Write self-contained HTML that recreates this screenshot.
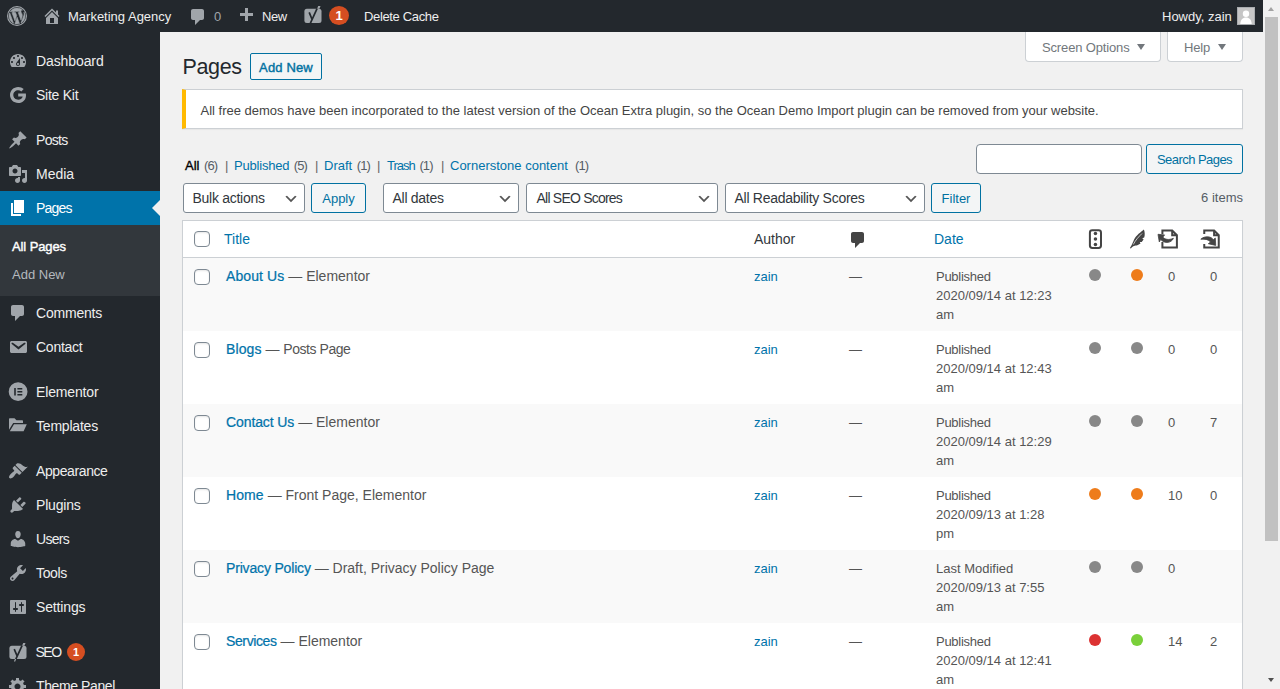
<!DOCTYPE html>
<html lang="en">
<head>
<meta charset="utf-8">
<title>Pages ‹ Marketing Agency — WordPress</title>
<style>
*{box-sizing:border-box}
html,body{margin:0;padding:0}
body{width:1280px;height:689px;overflow:hidden;position:relative;background:#f1f1f1;font-family:"Liberation Sans",sans-serif;font-size:13px;line-height:1.4;color:#444}
a{color:#0073aa;text-decoration:none}
svg{display:block}
/* admin bar */
#bar{position:absolute;left:0;top:0;width:1263px;height:32px;background:#23282d;color:#eee;font-size:13px;line-height:32px;z-index:5}
#bar .it{position:absolute;top:1px;height:32px;white-space:nowrap;color:#eee}
#bar svg{position:absolute;fill:#a0a5aa}
/* sidebar */
#menu{position:absolute;left:0;top:32px;width:160px;height:657px;background:#23282d}
#menu .mi{position:absolute;left:0;width:160px;height:34px;color:#eee;font-size:14px;line-height:34px}
#menu .mi span.t{position:absolute;left:36px;top:0;white-space:nowrap}
#menu .mi svg{position:absolute;left:8px;top:7px;width:20px;height:20px;fill:#a0a5aa}
#menu .mi.cur{background:#0073aa;color:#fff}
#menu .mi.cur svg{fill:#fff}
#menu .mi.cur:after{content:"";position:absolute;right:0;top:9px;border:8px solid transparent;border-right-color:#f1f1f1}
#sub{position:absolute;left:0;top:193px;width:160px;height:71px;background:#32373c;font-size:13px}
#sub div{position:absolute;left:12px;white-space:nowrap;line-height:18px}
.badge{position:absolute;width:18px;height:18px;border-radius:9px;background:#d54e21;color:#fff;font-size:11px;line-height:18px;text-align:center}
/* scrollbar */
#sb{position:absolute;left:1263px;top:0;width:17px;height:689px;background:#f1f1f1}
#sb .th{position:absolute;left:2px;top:17px;width:13px;height:524px;background:#c1c1c1}
#sb .up{position:absolute;left:4.500px;top:7px;border:3.500px solid transparent;border-top:none;border-bottom:4px solid #a3a3a3}
#sb .dn{position:absolute;left:4.500px;top:678px;border:3.500px solid transparent;border-bottom:none;border-top:4px solid #505050}
/* content */
.tab{position:absolute;top:32px;height:30px;background:#fff;border:1px solid #ccd0d4;border-top:none;border-radius:0 0 4px 4px;color:#72777c;font-size:13px;line-height:31px;white-space:nowrap;letter-spacing:-.15px}
.tab:after{content:"";position:absolute;top:12px;left:var(--a);border:4px solid transparent;border-bottom:none;border-top:6px solid #72777c;border-left-width:4.5px;border-right-width:4.5px}
h1{position:absolute;left:182.500px;top:52px;margin:0;font-size:21.500px;font-weight:400;line-height:30px;color:#23282d;letter-spacing:-.35px}
.btn{position:absolute;border:1px solid #0071a1;border-radius:3px;background:#f3f5f6;color:#0071a1;font-size:13px;line-height:29px;height:30px;text-align:center;white-space:nowrap}
#notice{position:absolute;left:182px;top:89px;width:1061px;height:40px;background:#fff;border:1px solid #ccd0d4;border-left:4px solid #ffb900;box-shadow:0 1px 1px rgba(0,0,0,.04)}
#notice p{position:absolute;left:14.500px;top:1px;margin:0;line-height:40px;white-space:nowrap;color:#444}
#subsub{position:absolute;left:0;top:157px;line-height:18px;white-space:nowrap;color:#666}
#subsub>*{position:absolute;top:0;font-style:normal}
#subsub .c{color:#555d66;letter-spacing:-.9px;margin-left:1px}
.inp{position:absolute;background:#fff;border:1px solid #7e8993;border-radius:4px;height:30px}
.sel{position:absolute;background:#fff;border:1px solid #7e8993;border-radius:3px;height:30px;top:183px;color:#32373c;font-size:14px;line-height:28px;padding-left:8.500px;white-space:nowrap;letter-spacing:-.28px}
.sel svg{position:absolute;right:5px;top:7px;width:16px;height:16px}
#items{position:absolute;right:37px;top:189px;line-height:18px;color:#555d66}
/* table */
#tbl{position:absolute;left:182px;top:220px;width:1061px;height:480px;background:#fff;border:1px solid #ccd0d4;box-shadow:0 1px 1px rgba(0,0,0,.04)}
#tbl .hd{position:absolute;left:0;top:0;width:1059px;height:37px;border-bottom:1px solid #ccd0d4;font-size:14px;line-height:36px}
.row{position:absolute;left:0;width:1059px;height:73px;font-size:13px;line-height:19px;color:#555}
.row.odd{background:#f9f9f9}
.cb{position:absolute;left:11px;width:16px;height:16px;border:1px solid #7e8993;border-radius:4px;background:#fff;box-shadow:inset 0 1px 2px rgba(0,0,0,.1)}
.row .ti{position:absolute;left:43px;top:8px;font-size:14px;line-height:20px;white-space:nowrap;color:#555}
.row .ti a{-webkit-text-stroke:.22px #0073aa;color:#0073aa;letter-spacing:.1px}
.row .au{position:absolute;left:571px;top:9px}
.row .cm{position:absolute;left:666px;top:9px}
.row .dt{position:absolute;left:753px;top:9px;width:130px}
.row .dt i{font-style:normal;letter-spacing:-.27px}
.dot{position:absolute;top:11px;width:12px;height:12px;border-radius:6px}
.g{background:#888}.o{background:#ee7c1b}.r{background:#dc3232}.gr{background:#7ad03a}
.row .n1{position:absolute;left:985px;top:9px}
.row .n2{position:absolute;left:1027px;top:9px}
</style>
</head>
<body>
<div id="menu">
<div class="mi" style="top:12px"><svg viewBox="0 0 20 20"><path d="M3.760 16h12.480c1.100-1.370 1.760-3.110 1.760-5 0-4.420-3.580-8-8-8s-8 3.580-8 8c0 1.890.66 3.630 1.760 5zM10 4c.55 0 1 .45 1 1s-.45 1-1 1-1-.45-1-1 .45-1 1-1zM6 6c.55 0 1 .45 1 1s-.45 1-1 1-1-.45-1-1 .45-1 1-1zm8 0c.55 0 1 .45 1 1s-.45 1-1 1-1-.45-1-1 .45-1 1-1zm-5.370 5.550L12 7v6c0 1.100-.9 2-2 2s-2-.9-2-2c0-.57.24-1.080.63-1.450zM4 10c.55 0 1 .45 1 1s-.45 1-1 1-1-.45-1-1 .45-1 1-1zm12 0c.55 0 1 .45 1 1s-.45 1-1 1-1-.45-1-1 .45-1 1-1zm-5 3c0-.55-.45-1-1-1s-1 .45-1 1 .45 1 1 1 1-.45 1-1z"/></svg><span class="t" style="letter-spacing:-0.1px">Dashboard</span></div>
<div class="mi" style="top:46px"><svg viewBox="0 0 20 20"><path d="M10.200 8.400v3.200h4.500c-.4 1.900-2 3.100-4.500 3.100-2.700 0-4.900-2.100-4.900-4.700s2.200-4.700 4.900-4.700c1.200 0 2.300.4 3.100 1.100l2.400-2.400C14.200 2.700 12.300 2 10.200 2 5.700 2 2 5.600 2 10s3.700 8 8.200 8c4.700 0 7.800-3.200 7.800-7.800 0-.6-.1-1.200-.2-1.800z"/></svg><span class="t" style="letter-spacing:-0.25px">Site Kit</span></div>
<div class="mi" style="top:91px"><svg viewBox="0 0 20 20"><path d="M10.440 3.020l1.820-1.820 6.360 6.350-1.830 1.820c-1.050-.68-2.480-.57-3.410.36l-.75.75c-.92.93-1.040 2.350-.35 3.410l-1.830 1.820-2.410-2.410-2.800 2.790c-.42.42-3.380 2.710-3.800 2.290s1.860-3.390 2.280-3.810l2.790-2.790L4.100 9.360l1.830-1.820c1.050.69 2.480.57 3.400-.36l.75-.75c.93-.92 1.050-2.350.36-3.410z"/></svg><span class="t" style="letter-spacing:-0.7px">Posts</span></div>
<div class="mi" style="top:125px"><svg viewBox="0 0 20 20"><path d="M13 11V4c0-.55-.45-1-1-1h-1.670L9 1H5L3.670 3H2c-.55 0-1 .45-1 1v7c0 .55.45 1 1 1h10c.55 0 1-.45 1-1zM7 4.500c1.380 0 2.500 1.120 2.500 2.500S8.380 9.500 7 9.500 4.500 8.380 4.500 7 5.620 4.500 7 4.500zM14 6h5v10.500c0 1.380-1.120 2.500-2.500 2.500S14 17.880 14 16.500s1.120-2.500 2.500-2.500c.17 0 .34.020.5.050V9h-3V6zm-4 8.050V13h2v3.500c0 1.380-1.120 2.500-2.500 2.500S7 17.880 7 16.500 8.120 14 9.500 14c.17 0 .34.020.5.050z"/></svg><span class="t">Media</span></div>
<div class="mi cur" style="top:159px"><svg viewBox="0 0 20 20"><path d="M6 15V2h10v13H6zm-1 1h8v2H3V5h2v11z"/></svg><span class="t" style="letter-spacing:-0.8px">Pages</span></div>
<div class="mi" style="top:264px"><svg viewBox="0 0 20 20"><path d="M5 2h9c1.100 0 2 .9 2 2v7c0 1.100-.9 2-2 2h-2l-5 5v-5H5c-1.100 0-2-.9-2-2V4c0-1.100.9-2 2-2z"/></svg><span class="t" style="letter-spacing:-0.2px">Comments</span></div>
<div class="mi" style="top:298px"><svg viewBox="0 0 20 20"><path d="M3.870 4h13.250C18.370 4 19 4.590 19 5.790v8.420c0 1.190-.63 1.790-1.880 1.790H3.870c-1.250 0-1.880-.6-1.880-1.790V5.790c0-1.200.63-1.790 1.880-1.790zm6.620 8.600l6.740-5.530c.24-.2.43-.66.13-1.070-.29-.41-.82-.42-1.170-.17l-5.700 3.860L4.800 5.830c-.35-.25-.88-.24-1.170.17-.3.410-.11.870.13 1.070z"/></svg><span class="t" style="letter-spacing:-0.25px">Contact</span></div>
<div class="mi" style="top:343px"><svg viewBox="0 0 20 20"><path fill-rule="evenodd" d="M10.100.3a9.400 9.400 0 1 0 0 18.800 9.400 9.400 0 0 0 0-18.800zM6.200 6h1.600v7.500H6.200zm3.200 0h4.900v1.500H9.400zm0 3h4.900v1.500H9.400zm0 3h4.900v1.500H9.400z"/></svg><span class="t" style="letter-spacing:-0.15px">Elementor</span></div>
<div class="mi" style="top:377px"><svg viewBox="0 0 20 20"><path d="M1 3.200c0-.6.400-1 1-1h4.500l2 2H14c.6 0 1 .4 1 1V7H5.200L1 13.800zM6 8.200H18.800L15.600 15.300H1.800z"/></svg><span class="t" style="letter-spacing:-0.2px">Templates</span></div>
<div class="mi" style="top:422px"><svg viewBox="0 0 20 20"><path d="M14.480 11.060L7.410 3.990l1.500-1.500c.5-.56 2.300-.47 3.510.32 1.210.8 1.430 1.280 2.910 2.100 1.180.64 2.450 1.260 4.450.85zm-.71.71L6.700 4.700 4.930 6.470c-.39.39-.39 1.020 0 1.410l1.060 1.060c.39.39.39 1.030 0 1.420-.6.6-1.430 1.110-2.210 1.690-.35.26-.7.53-1.010.84C1.430 14.230.4 16.080 1.400 17.070c.99 1 2.840-.03 4.180-1.360.31-.31.58-.66.85-1.020.57-.78 1.080-1.610 1.690-2.210.39-.39 1.020-.39 1.410 0l1.060 1.060c.39.39 1.020.39 1.410 0z"/></svg><span class="t" style="letter-spacing:-0.4px">Appearance</span></div>
<div class="mi" style="top:456px"><svg viewBox="0 0 20 20"><path d="M13.110 4.360L9.870 7.600 8 5.730l3.240-3.240c.35-.34 1.050-.2 1.560.32.52.51.66 1.210.31 1.550zm-8 1.770l.91-1.120 9.010 9.010-1.190.84c-.71.71-2.630 1.160-3.820 1.160H6.140L4.900 17.260c-.59.59-1.540.59-2.120 0-.59-.58-.59-1.530 0-2.120l1.240-1.240v-3.880c0-1.130.4-3.190 1.090-3.890zm7.260 3.970l3.240-3.240c.34-.35 1.040-.21 1.550.31.520.51.66 1.210.31 1.550l-3.240 3.250z"/></svg><span class="t" style="letter-spacing:-0.2px">Plugins</span></div>
<div class="mi" style="top:490px"><svg viewBox="0 0 20 20"><path d="M10 9.250c-2.270 0-2.730-3.440-2.730-3.440C7 4.020 7.820 2 9.970 2c2.160 0 2.980 2.020 2.710 3.810 0 0-.41 3.440-2.680 3.440zm0 2.570L12.720 10c2.390 0 4.520 2.330 4.520 4.530v2.490s-3.650 1.130-7.240 1.130c-3.650 0-7.240-1.130-7.240-1.130v-2.490c0-2.250 1.940-4.480 4.470-4.480z"/></svg><span class="t" style="letter-spacing:-0.7px">Users</span></div>
<div class="mi" style="top:524px"><svg viewBox="0 0 20 20"><path d="M16.680 9.770c-1.340 1.340-3.300 1.670-4.950.99l-5.410 6.520c-.99.99-2.590.99-3.580 0s-.99-2.590 0-3.570l6.520-5.420c-.68-1.650-.35-3.610.99-4.950 1.280-1.280 3.120-1.620 4.720-1.060l-2.890 2.890 2.820 2.820 2.860-2.870c.53 1.580.18 3.390-1.080 4.650zM3.810 16.210c.4.390 1.040.39 1.430 0 .4-.4.4-1.040 0-1.430-.39-.4-1.030-.4-1.430 0-.39.390-.39 1.030 0 1.430z"/></svg><span class="t" style="letter-spacing:-0.35px">Tools</span></div>
<div class="mi" style="top:558px"><svg viewBox="0 0 20 20"><path d="M18 16V4c0-.55-.45-1-1-1H3c-.55 0-1 .45-1 1v12c0 .55.45 1 1 1h14c.55 0 1-.45 1-1zM8 11h1c.55 0 1 .45 1 1s-.45 1-1 1H8v1.500c0 .28-.22.5-.5.5s-.5-.22-.5-.5V13H6c-.55 0-1-.45-1-1s.45-1 1-1h1V5.500c0-.28.22-.5.5-.5s.5.220.5.500V11zm5-2h-1c-.55 0-1-.45-1-1s.45-1 1-1h1V5.500c0-.28.22-.5.5-.5s.5.220.5.500V7h1c.55 0 1 .45 1 1s-.45 1-1 1h-1v5.500c0 .28-.22.5-.5.5s-.5-.22-.5-.5V9z"/></svg><span class="t" style="letter-spacing:-0.15px">Settings</span></div>
<div class="mi" style="top:603px"><svg style="left:8px;top:7px;width:20px;height:22px" viewBox="0 0 20 22"><rect x="1.400" y="3.700" width="17.100" height="13.300" rx="2.500"/><path d="M14.100 3.800l1.100-2.700h2.300l-1.100 2.700z"/><path d="M6.200 7.200l3 7M14.050 3.700L7.500 17.800" stroke="#23282d" stroke-width="1.700" fill="none"/><path d="M7.600 17l-1.100 2.600" stroke="#a0a5aa" stroke-width="1.200" fill="none"/></svg><span class="t" style="letter-spacing:-1.500px;left:35.500px">SEO</span><div class="badge" style="left:67px;top:8px;font-weight:bold">1</div></div>
<div class="mi" style="top:637px"><svg viewBox="0 0 20 20"><path d="M18 12h-2.180c-.17.7-.44 1.350-.81 1.930l1.540 1.540-2.100 2.100-1.540-1.540c-.58.36-1.230.63-1.910.79V19H8v-2.180c-.68-.16-1.330-.43-1.910-.79l-1.540 1.540-2.120-2.120 1.540-1.540c-.36-.58-.63-1.230-.79-1.910H1V9.030h2.170c.16-.7.44-1.350.8-1.940L2.430 5.550l2.100-2.100 1.540 1.540c.58-.37 1.240-.64 1.930-.81V2h3v2.180c.68.16 1.330.43 1.910.79l1.540-1.540 2.120 2.120-1.540 1.540c.36.59.64 1.240.8 1.940H18V12zm-8.500 1.500c1.660 0 3-1.340 3-3s-1.340-3-3-3-3 1.340-3 3 1.340 3 3 3z"/></svg><span class="t" style="letter-spacing:-.4px">Theme Panel</span></div>
<div id="sub"><div style="top:13px;color:#fff;-webkit-text-stroke:.4px #fff;letter-spacing:-.1px">All Pages</div><div style="top:41px;color:#b4b9be">Add New</div></div>
</div>
<div id="bar">
<svg style="left:7px;top:6px;width:20px;height:20px" viewBox="0 0 20 20"><circle cx="10" cy="10" r="9.450" fill="none" stroke="#a0a5aa" stroke-width="1.100"/><path stroke="#a0a5aa" stroke-width=".7" transform="translate(10 10) scale(.9) translate(-10 -10)" d="M7.780 15.370L4.370 6.220c.55-.02 1.170-.08 1.170-.08.5-.06.440-1.130-.06-1.110 0 0-1.450.110-2.370.110-.18 0-.37 0-.58-.01C4.120 2.690 6.870 1.110 10 1.110c2.330 0 4.450.87 6.050 2.340-.68-.11-1.650.39-1.650 1.580 0 .74.45 1.360.9 2.100.35.610.55 1.360.55 2.460 0 1.490-1.400 5-1.400 5l-3.030-8.370c.54-.02.82-.17.82-.17.5-.05.44-1.250-.06-1.220 0 0-1.440.12-2.380.12-.87 0-2.330-.12-2.330-.12-.5-.03-.56 1.200-.06 1.220l.92.08 1.260 3.410zM17.410 10c.24-.64.74-1.870.43-4.250.7 1.290 1.050 2.710 1.050 4.250 0 3.290-1.730 6.240-4.400 7.780.97-2.590 1.940-5.200 2.920-7.780zM6.100 18.090C3.120 16.650 1.110 13.530 1.110 10c0-1.300.23-2.480.72-3.590C3.250 10.300 4.670 14.200 6.100 18.090zm4.030-6.630l2.580 6.980c-.86.29-1.760.45-2.710.45-.79 0-1.570-.11-2.290-.33.81-2.380 1.620-4.740 2.420-7.100z"/></svg>
<svg style="left:42px;top:6px;width:20px;height:20px" viewBox="0 0 20 20"><path d="M16 8.500l1.530 1.530-1.060 1.060L10 4.620l-6.470 6.470-1.060-1.060L10 2.500l4 4v-2h2v4zm-6-2.460l6 5.990V18H4v-5.970zM12 17v-5H8v5h4z"/></svg>
<div class="it" style="left:68px">Marketing Agency</div>
<svg style="left:188px;top:7px;width:20px;height:20px" viewBox="0 0 20 20"><path d="M5 2h9c1.100 0 2 .9 2 2v7c0 1.100-.9 2-2 2h-2l-5 5v-5H5c-1.100 0-2-.9-2-2V4c0-1.100.9-2 2-2z"/></svg>
<div class="it" style="left:214px;color:#a0a5aa">0</div>
<svg style="left:236px;top:6px;width:20px;height:20px" viewBox="0 0 20 20"><path d="M17 7v3h-5v5H9v-5H4V7h5V2h3v5h5z"/></svg>
<div class="it" style="left:262px;letter-spacing:-.4px">New</div>
<svg style="left:303px;top:5px;width:20px;height:22px" viewBox="0 0 20 22"><rect x="1.400" y="3.700" width="17.100" height="14.300" rx="2.500"/><path d="M14.100 3.800l1.100-2.700h2.300l-1.100 2.700z"/><path d="M6.200 7.400l3 7.300M14.050 3.700L7.200 18.600" stroke="#23282d" stroke-width="1.700" fill="none"/></svg>
<div class="badge" style="left:329px;top:6px;width:20px;height:19px;border-radius:50%;font-size:13px;font-weight:bold;line-height:19px">1</div>
<div class="it" style="left:364px;letter-spacing:-.35px">Delete Cache</div>
<div class="it" style="left:1162px">Howdy, zain</div>
<svg style="left:1237px;top:7px;width:18px;height:18px" viewBox="0 0 18 18"><rect width="18" height="18" fill="#a9acaf"/><rect x="1" y="1" width="16" height="16" fill="#c6c6c6"/><circle cx="9" cy="6.800" r="3.200" fill="#fff"/><path d="M3.300 17c.2-4.300 2.300-6.600 5.700-6.600s5.500 2.300 5.700 6.600z" fill="#fff"/></svg>
</div>
<div id="main">
<div class="tab" style="left:1025px;width:136px;padding-left:16px;--a:111px">Screen Options</div>
<div class="tab" style="left:1167px;width:76px;padding-left:16px;--a:50px">Help</div>
<h1>Pages</h1>
<div class="btn" style="left:250px;top:53px;width:72px;height:27px;line-height:27px;-webkit-text-stroke:.4px #0071a1;letter-spacing:.15px;border-radius:2px">Add New</div>
<div id="notice"><p>All free demos have been incorporated to the latest version of the Ocean Extra plugin, so the Ocean Demo Import plugin can be removed from your website.</p></div>
<div id="subsub"><span style="left:185px;color:#000"><span style="-webkit-text-stroke:.35px #000">All</span> <span class="c">(6)</span></span><i style="left:225px">|</i><a style="left:234px;letter-spacing:-.2px">Published <span class="c">(5)</span></a><i style="left:315px">|</i><a style="left:324px">Draft <span class="c">(1)</span></a><i style="left:377px">|</i><a style="left:387px"><span style="letter-spacing:-1px">Trash</span> <span class="c">(1)</span></a><i style="left:441px">|</i><a style="left:450px">Cornerstone content</a><span class="c" style="left:574px">(1)</span></div>
<div class="inp" style="left:976px;top:144px;width:166px"></div>
<div class="btn" style="left:1146px;top:144px;width:97px;letter-spacing:-.55px">Search Pages</div>
<div class="sel" style="left:183px;width:122px">Bulk actions<svg viewBox="0 0 20 20"><path d="M5 6l5 5 5-5 2 1-7 7-7-7 2-1z" fill="#555"/></svg></div>
<div class="btn" style="left:311px;top:183px;width:55px">Apply</div>
<div class="sel" style="left:383px;width:136px">All dates<svg viewBox="0 0 20 20"><path d="M5 6l5 5 5-5 2 1-7 7-7-7 2-1z" fill="#555"/></svg></div>
<div class="sel" style="left:526px;width:192px;letter-spacing:-.78px;padding-left:9.500px">All SEO Scores<svg viewBox="0 0 20 20"><path d="M5 6l5 5 5-5 2 1-7 7-7-7 2-1z" fill="#555"/></svg></div>
<div class="sel" style="left:725px;width:200px">All Readability Scores<svg viewBox="0 0 20 20"><path d="M5 6l5 5 5-5 2 1-7 7-7-7 2-1z" fill="#555"/></svg></div>
<div class="btn" style="left:931px;top:183px;width:50px">Filter</div>
<div id="items">6 items</div>
<div id="tbl">
<div class="hd">
<div class="cb" style="top:10px"></div>
<a style="position:absolute;left:41px">Title</a>
<span style="position:absolute;left:571px;color:#32373c">Author</span>
<svg style="position:absolute;left:664.500px;top:9px;width:20px;height:20px" viewBox="0 0 20 20"><path fill="#444" d="M5 2h9c1.100 0 2 .9 2 2v7c0 1.100-.9 2-2 2h-2l-5 5v-5H5c-1.100 0-2-.9-2-2V4c0-1.100.9-2 2-2z"/></svg>
<a style="position:absolute;left:751px">Date</a>
<svg style="position:absolute;left:897px;top:5px;width:150px;height:26px" viewBox="0 0 150 26" fill="#444">
<rect x="9.900" y="4.300" width="11.100" height="17.600" rx="2.400" fill="none" stroke="#444" stroke-width="2"/><circle cx="15.450" cy="7.600" r="1.750"/><circle cx="15.450" cy="13" r="1.750"/><circle cx="15.450" cy="18.400" r="1.750"/>
<path d="M63.900 3.600C61 6 56 9.500 54.100 13.500 53 16 52 19 49.900 22.100L50.900 22.600C51.600 21.400 52.500 20.300 54.750 19.800 56 19.650 57.200 19.500 57.900 19.100L60.500 17.500 59.750 16.100 61.700 16 63.600 13.500 62.250 12.300 64.200 11.600C65 9.500 64.900 6 63.900 3.600Z"/>
<path d="M53.300 18.500C55.500 14 59 10.500 62 7.500" fill="none" stroke="#fff" stroke-width=".7"/>
<path d="M82.400 8V4.500H92.200L96.900 9.200V21.600H82.400V16M92.200 4.500V9.200H96.900" fill="none" stroke="#444" stroke-width="2"/>
<path stroke="#444" stroke-width=".8" stroke-linejoin="round" d="M78 8.300L84.600 8.900 82.900 11.100C84.800 13.400 88.600 14.400 93.400 12.300 91.700 16.800 84.900 18.300 80.700 13.500L79.300 16Z"/>
<path d="M124.250 8V4.500H134.100L138.750 9.200V21.600H124.250V18M134.100 4.500V9.200H138.750" fill="none" stroke="#444" stroke-width="2"/>
<path stroke="#444" stroke-width=".8" stroke-linejoin="round" d="M120.800 13.200C124.800 9.600 131.300 10.200 133.300 13.700L135.300 12.100 135.700 19.400 128.300 17.700 130.500 16.100C128.800 13.500 125.300 12.900 120.800 13.200Z"/>
</svg>
</div>
<div class="row odd" style="top:37px"><div class="cb" style="top:11px"></div><div class="ti"><a>About Us</a> — Elementor</div><a class="au">zain</a><span class="cm">—</span><div class="dt"><i>Published</i><br>2020/09/14 at 12:23<br>am</div><div class="dot g" style="left:906px"></div><div class="dot o" style="left:948px"></div><div class="n1">0</div><div class="n2">0</div></div>
<div class="row" style="top:110px"><div class="cb" style="top:11px"></div><div class="ti"><a>Blogs</a> — <span style="letter-spacing:-.45px">Posts Page</span></div><a class="au">zain</a><span class="cm">—</span><div class="dt"><i>Published</i><br>2020/09/14 at 12:43<br>am</div><div class="dot g" style="left:906px"></div><div class="dot g" style="left:948px"></div><div class="n1">0</div><div class="n2">0</div></div>
<div class="row odd" style="top:183px"><div class="cb" style="top:11px"></div><div class="ti"><a style="letter-spacing:-.1px">Contact Us</a> — Elementor</div><a class="au">zain</a><span class="cm">—</span><div class="dt"><i>Published</i><br>2020/09/14 at 12:29<br>am</div><div class="dot g" style="left:906px"></div><div class="dot g" style="left:948px"></div><div class="n1">0</div><div class="n2">7</div></div>
<div class="row" style="top:256px"><div class="cb" style="top:11px"></div><div class="ti"><a>Home</a> — Front Page, Elementor</div><a class="au">zain</a><span class="cm">—</span><div class="dt"><i>Published</i><br>2020/09/13 at 1:28<br>pm</div><div class="dot o" style="left:906px"></div><div class="dot o" style="left:948px"></div><div class="n1">10</div><div class="n2">0</div></div>
<div class="row odd" style="top:329px"><div class="cb" style="top:11px"></div><div class="ti"><a style="letter-spacing:-.17px">Privacy Policy</a> — Draft, Privacy Policy Page</div><a class="au">zain</a><span class="cm">—</span><div class="dt">Last Modified<br>2020/09/13 at 7:55<br>am</div><div class="dot g" style="left:906px"></div><div class="dot g" style="left:948px"></div><div class="n1">0</div><div class="n2"></div></div>
<div class="row" style="top:402px"><div class="cb" style="top:11px"></div><div class="ti"><a style="letter-spacing:-.38px">Services</a> — Elementor</div><a class="au">zain</a><span class="cm">—</span><div class="dt"><i>Published</i><br>2020/09/14 at 12:41<br>am</div><div class="dot r" style="left:906px"></div><div class="dot gr" style="left:948px"></div><div class="n1">14</div><div class="n2">2</div></div>

</div>
</div>
<div id="sb"><div class="up"></div><div class="th"></div><div class="dn"></div></div>
</body>
</html>
